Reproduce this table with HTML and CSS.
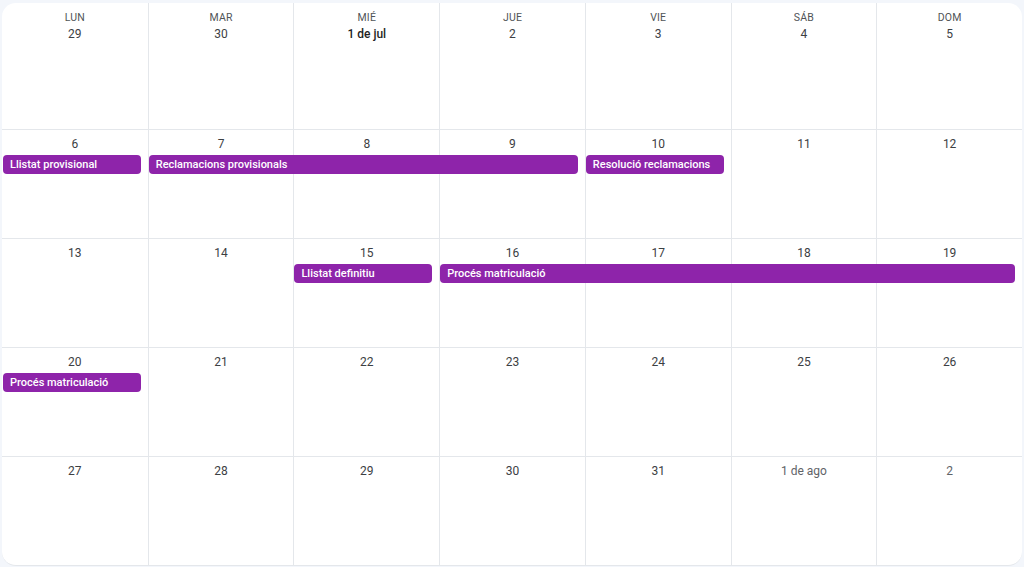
FILE: index.html
```html
<!DOCTYPE html>
<html lang="es">
<head>
<meta charset="utf-8">
<title>Calendario</title>
<link rel="stylesheet" href="styles.css">
</head>
<body>
<div class="card">
  <div class="week first">
    <div class="cell c1"><div class="dow">LUN</div><div class="date">29</div></div>
    <div class="cell c2"><div class="dow">MAR</div><div class="date">30</div></div>
    <div class="cell c3"><div class="dow">MIÉ</div><div class="date month">1 de jul</div></div>
    <div class="cell c4"><div class="dow">JUE</div><div class="date">2</div></div>
    <div class="cell c5"><div class="dow">VIE</div><div class="date">3</div></div>
    <div class="cell c6"><div class="dow">SÁB</div><div class="date">4</div></div>
    <div class="cell c7"><div class="dow">DOM</div><div class="date">5</div></div>
  </div>
  <div class="week">
    <div class="cell c1"><div class="date">6</div></div>
    <div class="cell c2"><div class="date">7</div></div>
    <div class="cell c3"><div class="date">8</div></div>
    <div class="cell c4"><div class="date">9</div></div>
    <div class="cell c5"><div class="date">10</div></div>
    <div class="cell c6"><div class="date">11</div></div>
    <div class="cell c7"><div class="date">12</div></div>
    <div class="event s1 span1">Llistat provisional</div>
    <div class="event s2 span3">Reclamacions provisionals</div>
    <div class="event s5 span1">Resolució reclamacions</div>
  </div>
  <div class="week">
    <div class="cell c1"><div class="date">13</div></div>
    <div class="cell c2"><div class="date">14</div></div>
    <div class="cell c3"><div class="date">15</div></div>
    <div class="cell c4"><div class="date">16</div></div>
    <div class="cell c5"><div class="date">17</div></div>
    <div class="cell c6"><div class="date">18</div></div>
    <div class="cell c7"><div class="date">19</div></div>
    <div class="event s3 span1">Llistat definitiu</div>
    <div class="event s4 span4">Procés matriculació</div>
  </div>
  <div class="week">
    <div class="cell c1"><div class="date">20</div></div>
    <div class="cell c2"><div class="date">21</div></div>
    <div class="cell c3"><div class="date">22</div></div>
    <div class="cell c4"><div class="date">23</div></div>
    <div class="cell c5"><div class="date">24</div></div>
    <div class="cell c6"><div class="date">25</div></div>
    <div class="cell c7"><div class="date">26</div></div>
    <div class="event s1 span1">Procés matriculació</div>
  </div>
  <div class="week">
    <div class="cell c1"><div class="date">27</div></div>
    <div class="cell c2"><div class="date">28</div></div>
    <div class="cell c3"><div class="date">29</div></div>
    <div class="cell c4"><div class="date">30</div></div>
    <div class="cell c5"><div class="date">31</div></div>
    <div class="cell c6"><div class="date other">1 de ago</div></div>
    <div class="cell c7"><div class="date other">2</div></div>
  </div>
</div>
</body>
</html>
```
FILE: styles.css
```css
html, body {
  margin: 0;
  padding: 0;
  background: #f3f6fb;
}
body {
  padding: 3px 2px 0 2px;
  font-family: Roboto, "Noto Sans", "Liberation Sans", sans-serif;
}
.card {
  background: #fff;
  border-radius: 14px;
  height: 563px;
  display: grid;
  grid-template-rows: 126px repeat(4, 1fr);
  overflow: hidden;
  border-bottom: 1px solid #e4e7eb;
  box-sizing: border-box;
}
.week {
  display: grid;
  grid-template-columns: repeat(7, 1fr);
  grid-template-rows: 25px 19px 1fr;
  border-top: 1px solid #e4e7eb;
}
.week.first {
  border-top: 0;
  grid-template-rows: 38px 18px 1fr;
}
.cell {
  grid-row: 1 / -1;
  border-left: 1px solid #e4e7eb;
  padding-top: 6px;
  text-align: center;
}
.c1 { grid-column: 1; border-left: 0; }
.c2 { grid-column: 2; }
.c3 { grid-column: 3; }
.c4 { grid-column: 4; }
.c5 { grid-column: 5; }
.c6 { grid-column: 6; }
.c7 { grid-column: 7; }
.week.first .cell { padding-top: 7px; }
.dow {
  font-size: 10.5px;
  line-height: 16px;
  color: #505457;
  letter-spacing: 0.2px;
}
.date {
  font-size: 12px;
  line-height: 16px;
  font-weight: 400;
  color: #3c4043;
}
.date.month {
  font-weight: 500;
  color: #1f1f1f;
}
.date.other {
  color: #5f6368;
}
.event {
  grid-row: 2;
  background: #8e24aa;
  color: #fff;
  font-size: 11px;
  font-weight: 500;
  line-height: 19px;
  height: 19px;
  border-radius: 4px;
  padding-left: 7px;
  margin: 0 7px 0 1px;
  white-space: nowrap;
  overflow: hidden;
  position: relative;
  z-index: 1;
}
.s1 { grid-column-start: 1; }
.s2 { grid-column-start: 2; }
.s3 { grid-column-start: 3; }
.s4 { grid-column-start: 4; }
.s5 { grid-column-start: 5; }
.span1 { grid-column-end: span 1; }
.span3 { grid-column-end: span 3; }
.span4 { grid-column-end: span 4; }
```
